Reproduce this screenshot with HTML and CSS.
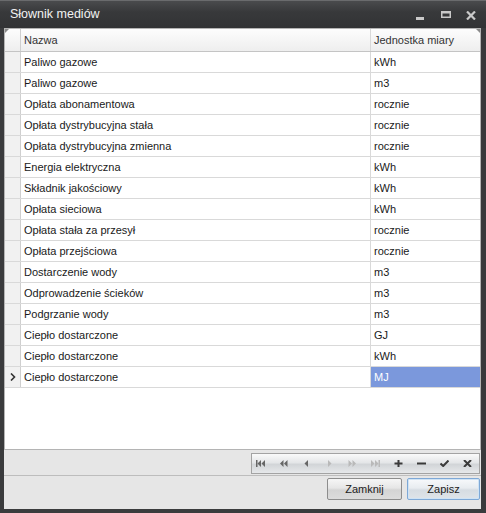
FILE: index.html
```html
<!DOCTYPE html>
<html lang="pl">
<head>
    <meta charset="UTF-8">
    <title>Słownik mediów</title>
    <link rel="stylesheet" href="styles.css">
</head>
<body>
    <div class="window">
        <!-- Pasek tytułu -->
        <div class="titlebar">
            <span class="title">Słownik mediów</span>
            <div class="caption-buttons">
                <svg class="cap cap-min" width="8" height="3" viewBox="0 0 8 3"><rect x="0" y="0" width="8" height="3" fill="#c9c9c9"/></svg>
                <svg class="cap cap-max" width="10" height="7" viewBox="0 0 10 7"><rect x="0.75" y="0.75" width="8.5" height="5.5" fill="none" stroke="#c9c9c9" stroke-width="1.5"/><rect x="0" y="0" width="10" height="2.5" fill="#c9c9c9"/></svg>
                <svg class="cap cap-close" width="10" height="9" viewBox="0 0 10 9"><path d="M1 0.5 L9 8.5 M9 0.5 L1 8.5" stroke="#c9c9c9" stroke-width="2.2"/></svg>
            </div>
        </div>

        <div class="client">
            <!-- Siatka danych -->
            <div class="grid">
                <div class="row header">
                    <div class="cell indicator">
                        <svg class="corner-left" width="4" height="4" viewBox="0 0 4 4"><path d="M0 0 H4 L0 4 Z" fill="#8a8a8a"/></svg>
                    </div>
                    <div class="cell">Nazwa</div>
                    <div class="cell">Jednostka miary
                        <svg class="corner-right" width="4" height="4" viewBox="0 0 4 4"><path d="M0 0 H4 V4 Z" fill="#8a8a8a"/></svg>
                    </div>
                </div>
                <div class="row"><div class="cell indicator"></div><div class="cell">Paliwo gazowe</div><div class="cell">kWh</div></div>
                <div class="row"><div class="cell indicator"></div><div class="cell">Paliwo gazowe</div><div class="cell">m3</div></div>
                <div class="row"><div class="cell indicator"></div><div class="cell">Opłata abonamentowa</div><div class="cell">rocznie</div></div>
                <div class="row"><div class="cell indicator"></div><div class="cell">Opłata dystrybucyjna stała</div><div class="cell">rocznie</div></div>
                <div class="row"><div class="cell indicator"></div><div class="cell">Opłata dystrybucyjna zmienna</div><div class="cell">rocznie</div></div>
                <div class="row"><div class="cell indicator"></div><div class="cell">Energia elektryczna</div><div class="cell">kWh</div></div>
                <div class="row"><div class="cell indicator"></div><div class="cell">Składnik jakościowy</div><div class="cell">kWh</div></div>
                <div class="row"><div class="cell indicator"></div><div class="cell">Opłata sieciowa</div><div class="cell">kWh</div></div>
                <div class="row"><div class="cell indicator"></div><div class="cell">Opłata stała za przesył</div><div class="cell">rocznie</div></div>
                <div class="row"><div class="cell indicator"></div><div class="cell">Opłata przejściowa</div><div class="cell">rocznie</div></div>
                <div class="row"><div class="cell indicator"></div><div class="cell">Dostarczenie wody</div><div class="cell">m3</div></div>
                <div class="row"><div class="cell indicator"></div><div class="cell">Odprowadzenie ścieków</div><div class="cell">m3</div></div>
                <div class="row"><div class="cell indicator"></div><div class="cell">Podgrzanie wody</div><div class="cell">m3</div></div>
                <div class="row"><div class="cell indicator"></div><div class="cell">Ciepło dostarczone</div><div class="cell">GJ</div></div>
                <div class="row"><div class="cell indicator"></div><div class="cell">Ciepło dostarczone</div><div class="cell">kWh</div></div>
                <div class="row current">
                    <div class="cell indicator">
                        <svg width="6" height="8" viewBox="0 0 6 8"><path d="M1 0.5 L4.5 4 L1 7.5" fill="none" stroke="#333" stroke-width="1.6"/></svg>
                    </div>
                    <div class="cell">Ciepło dostarczone</div>
                    <div class="cell selected">MJ</div>
                </div>
            </div>

            <!-- Nawigator -->
            <div class="navbar">
                <div class="navigator">
                    <svg class="nav on" viewBox="0 0 9 7"><rect x="0" y="0" width="1.5" height="7"/><path d="M5 0 L1.5 3.5 L5 7 Z M9 0 L5.5 3.5 L9 7 Z"/></svg>
                    <svg class="nav on" viewBox="0 0 9 7"><path d="M4.5 0 L1 3.5 L4.5 7 Z M8.5 0 L5 3.5 L8.5 7 Z"/></svg>
                    <svg class="nav on" viewBox="0 0 9 7"><path d="M6 0 L2.5 3.5 L6 7 Z"/></svg>
                    <svg class="nav off" viewBox="0 0 9 7"><path d="M3 0 L6.5 3.5 L3 7 Z"/></svg>
                    <svg class="nav off" viewBox="0 0 9 7"><path d="M0.5 0 L4 3.5 L0.5 7 Z M4.5 0 L8 3.5 L4.5 7 Z"/></svg>
                    <svg class="nav off" viewBox="0 0 9 7"><path d="M0 0 L3.5 3.5 L0 7 Z M4 0 L7.5 3.5 L4 7 Z"/><rect x="7.5" y="0" width="1.5" height="7"/></svg>
                    <svg class="nav act" viewBox="0 0 9 7"><path d="M0.5 3.5 H8.5 M4.5 -0.5 V7.5" stroke-width="2"/></svg>
                    <svg class="nav act" viewBox="0 0 9 7"><path d="M0 3.5 H9" stroke-width="2"/></svg>
                    <svg class="nav act" viewBox="0 0 9 7"><path d="M0.5 3.5 L3.2 6 L8.5 0.5" fill="none" stroke-width="2"/></svg>
                    <svg class="nav act" viewBox="0 0 9 7"><path d="M1 0 L8 7 M8 0 L1 7" stroke-width="2"/></svg>
                </div>
            </div>

            <!-- Przyciski -->
            <div class="buttons">
                <button class="btn btn-close">Zamknij</button>
                <button class="btn btn-save">Zapisz</button>
            </div>
        </div>
    </div>
</body>
</html>
```

FILE: styles.css
```css
body {
    margin: 0;
    font-family: "Liberation Sans", Arial, sans-serif;
    font-size: 11px;
    background: #3a3b3d;
}
.window {
    width: 486px;
    height: 513px;
    display: flex;
    flex-direction: column;
    background: #3a3b3d;
    box-sizing: border-box;
    border-top: 1px solid #6a6b6d;
}
.titlebar {
    height: 27px;
    display: flex;
    align-items: center;
    justify-content: space-between;
    background: linear-gradient(#4a4b4d, #38393b 40%, #323335);
    color: #f2f2f2;
}
.title {
    font-size: 12.5px;
    padding-left: 10px;
    padding-bottom: 1px;
}
.caption-buttons {
    display: flex;
    align-items: center;
    height: 100%;
    padding-right: 10px;
}
.cap {
    display: block;
}
.cap-min {
    margin-top: 8px;
    margin-right: 17px;
}
.cap-max {
    margin-right: 15px;
}
.cap-close {
    margin-top: 1px;
}

.client {
    flex: 1;
    margin: 0 5px 4px 4px;
    background: #e6e6e6;
    display: flex;
    flex-direction: column;
}
.grid {
    height: 422px;
    box-sizing: border-box;
    border: 1px solid #b4b4b4;
    background: #fff;
}
.row {
    display: grid;
    grid-template-columns: 16px 350px 109px;
    height: 21px;
    box-sizing: border-box;
    border-bottom: 1px solid #d9d9d9;
}
.cell {
    border-right: 1px solid #d9d9d9;
    padding-left: 3px;
    line-height: 20px;
    color: #1a1a1a;
    white-space: nowrap;
    overflow: hidden;
    position: relative;
}
.cell:last-child {
    border-right: none;
}
.indicator {
    padding-left: 0;
    background: #f1f1f1;
    border-right-color: #cfcfcf;
    display: flex;
    align-items: center;
    justify-content: center;
}
.header {
    height: 23px;
    border-bottom: 1px solid #c4c4c4;
    background: linear-gradient(#fdfdfd, #f1f1f1);
}
.header .cell {
    line-height: 22px;
    color: #333;
    background: linear-gradient(#fdfdfd, #eeeeee);
}
.corner-left {
    position: absolute;
    left: 0;
    top: 0;
}
.corner-right {
    position: absolute;
    right: 0;
    top: 0;
}
.selected {
    background: #7b98dc;
    color: #fff;
}

.navbar {
    height: 26px;
    box-sizing: border-box;
    border-bottom: 1px solid #bdbdbd;
    display: flex;
    justify-content: flex-end;
    padding: 3px 1px 0 0;
}
.navigator {
    width: 229px;
    height: 21px;
    box-sizing: border-box;
    border: 1px solid #a3a3a3;
    background: linear-gradient(#fafafa, #e4e6e8 45%, #d2d5d8 55%, #e6e8ea);
    display: flex;
    align-items: center;
    gap: 14px;
    padding-left: 4px;
}
.nav {
    width: 9px;
    height: 7px;
    display: block;
}
.nav.on {
    fill: #666;
}
.nav.off {
    fill: #b9b9b9;
}
.nav.act {
    fill: none;
    stroke: #3a3a3a;
}

.buttons {
    flex: 1;
    display: flex;
    justify-content: flex-end;
    align-items: flex-start;
    gap: 5px;
    padding: 2px 1px 0 0;
}
.btn {
    height: 22px;
    box-sizing: border-box;
    border: 1px solid #8d8d8d;
    border-radius: 2px;
    background: linear-gradient(#f6f6f6, #e6e6e6 45%, #d4d4d4 55%, #dcdcdc);
    font-family: "Liberation Sans", Arial, sans-serif;
    font-size: 11px;
    color: #222;
    padding: 0;
}
.btn-close {
    width: 75px;
}
.btn-save {
    width: 73px;
    border-color: #7ea8d6;
    box-shadow: inset 0 0 0 1px #cfe3f5;
    background: linear-gradient(#f7f9fb, #e8ecf0 45%, #d6dce2 55%, #dfe4e9);
}
```
